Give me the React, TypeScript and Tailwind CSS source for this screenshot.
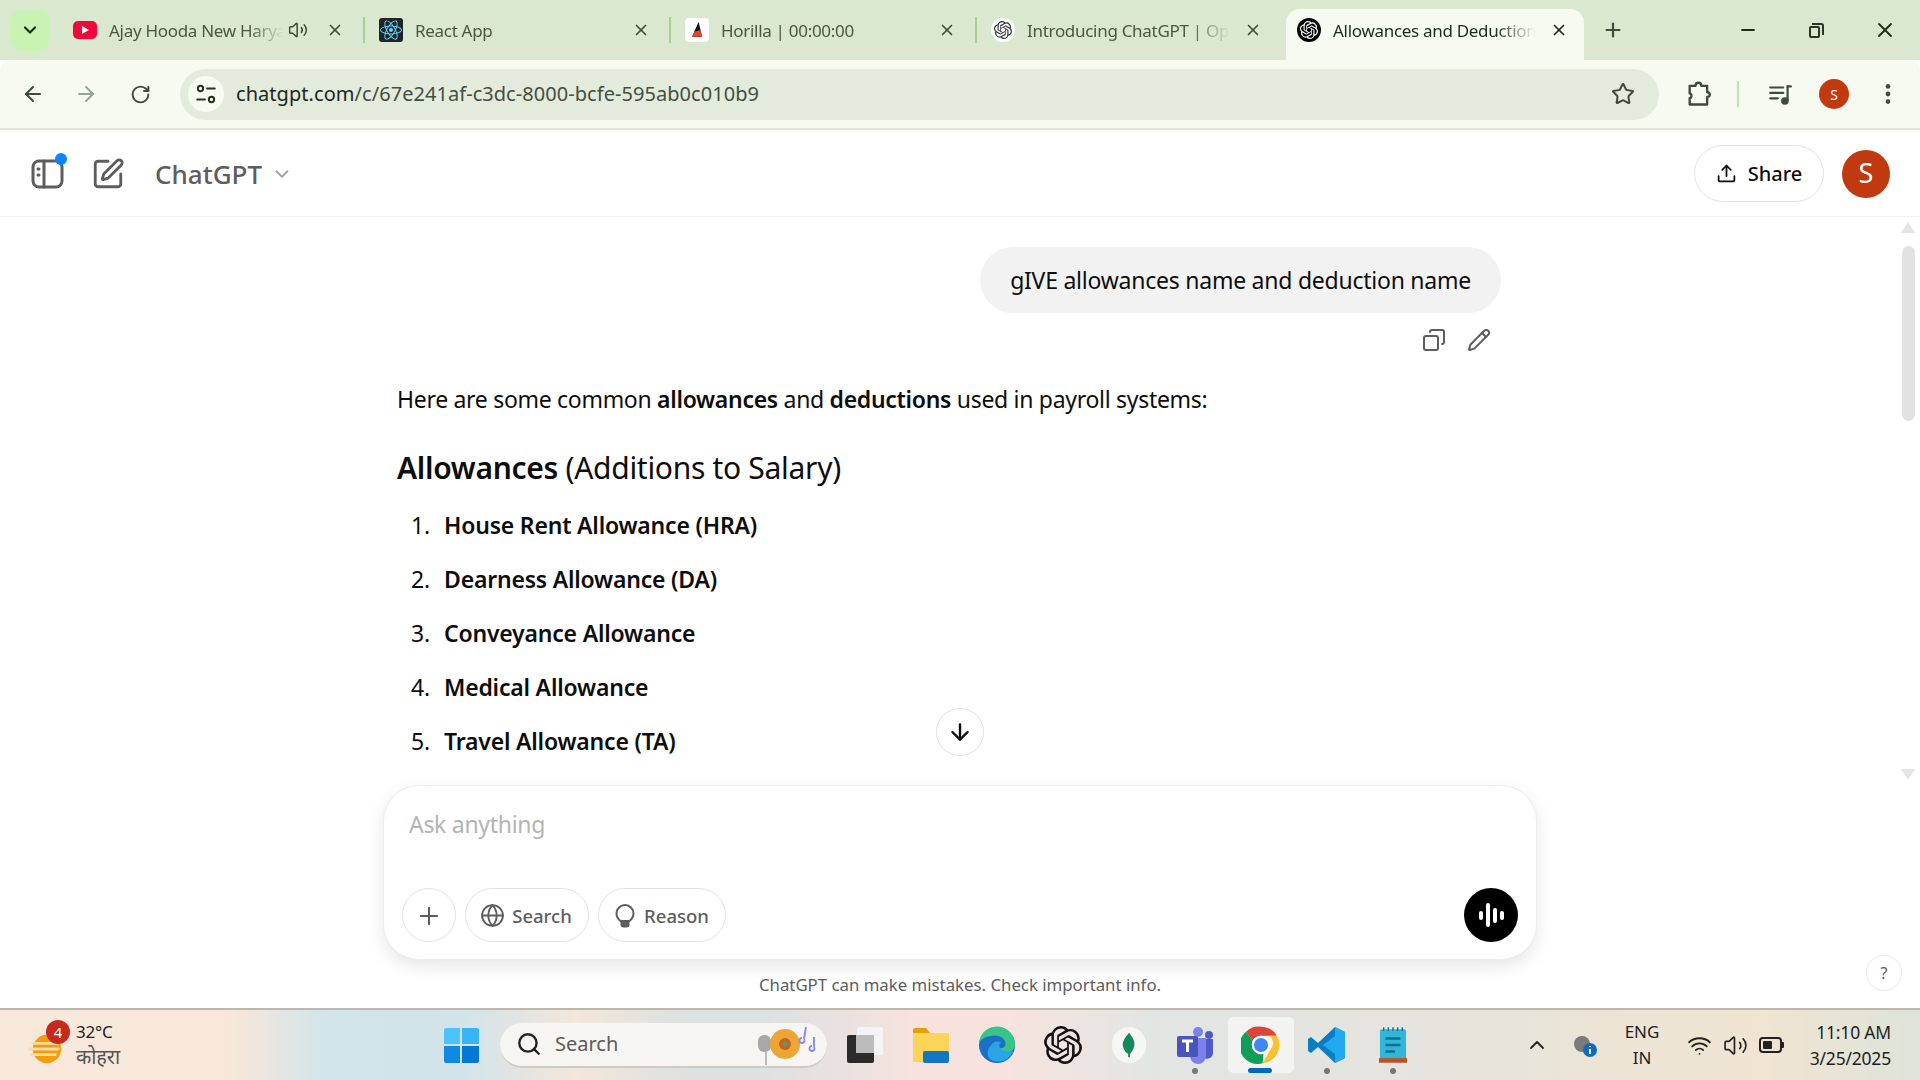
import {
  ArrowDown,
  ArrowLeft,
  ArrowRight,
  ChevronDown,
  ChevronUp,
  Copy,
  EllipsisVertical,
  Globe,
  Minus,
  Pencil,
  Plus,
  RotateCw,
  Search,
  SquarePen,
  Star,
  Upload,
  Volume2,
  Wifi,
  X,
} from 'lucide-react';
import type { ReactNode } from 'react';
import { FaReact } from 'react-icons/fa';
import { SiOpenai } from 'react-icons/si';

const FONT = "font-['Noto_Sans','Open_Sans',sans-serif]";

function TabSeparator() {
  return <div className="absolute right-[-4px] top-[17px] h-[26px] w-[2px] bg-[#a9d08f]" />;
}

function Tab({
  icon,
  title,
  audio,
  active,
  separator,
}: {
  icon: ReactNode;
  title: string;
  audio?: boolean;
  active?: boolean;
  separator?: boolean;
}) {
  return (
    <div className="relative flex h-[60px] w-[306px] shrink-0 items-center pl-[18px] pr-[17px]">
      {active && (
        <div className="absolute bottom-0 left-[7px] right-[1px] top-[9px] rounded-t-[14px] bg-[#f6faf0]" />
      )}
      <div className="relative flex h-6 w-6 shrink-0 items-center justify-center">{icon}</div>
      <div
        className={`relative ml-3 flex-1 overflow-hidden whitespace-nowrap pt-[1px] text-[17px] tracking-[-0.3px] [mask-image:linear-gradient(to_right,black_80%,transparent)] ${
          active ? 'text-[#1e2a1a]' : 'text-[#4c5548]'
        } ${audio ? 'mr-[5px]' : ''}`}
      >
        {title}
      </div>
      {audio && <Volume2 className="relative mr-[4px] h-5 w-5 text-[#3f4a3b]" strokeWidth={1.8} />}
      <X className={`relative ml-[14px] h-[18px] w-[18px] ${active ? 'text-[#222]' : 'text-[#3f4a3b]'}`} strokeWidth={2.2} />
      {separator && <TabSeparator />}
    </div>
  );
}

function TabStrip() {
  return (
    <div className="flex h-[60px] shrink-0 items-center bg-[#d9e8cf] text-[#3f4a3b]">
      <div className="ml-[10px] mr-[5px] flex h-[42px] w-[40px] shrink-0 items-center justify-center rounded-[14px] bg-[#c9f3b2]">
        <ChevronDown className="h-5 w-5 text-[#1d2a18]" strokeWidth={2.6} />
      </div>
      <Tab
        audio
        separator
        title="Ajay Hooda New Haryanvi Song"
        icon={
          <div className="flex h-[18px] w-6 items-center justify-center rounded-[5px] bg-[#f5063a]">
            <div className="h-0 w-0 border-y-[4px] border-l-[7px] border-y-transparent border-l-white" />
          </div>
        }
      />
      <Tab
        separator
        title="React App"
        icon={
          <div className="flex h-6 w-6 items-center justify-center rounded-[3px] bg-[#20232a]">
            <FaReact className="h-[22px] w-[22px] text-[#61dafb]" />
          </div>
        }
      />
      <Tab
        separator
        title="Horilla | 00:00:00"
        icon={
          <div className="flex h-6 w-6 items-center justify-center rounded-[4px] bg-white">
            <svg viewBox="0 0 24 24" className="h-5 w-5">
              <path d="M14 2 L18 20 H6 Z" fill="#111" />
              <path d="M6 20 L9 14 L16 12 L18 20 Z" fill="#e2452c" />
            </svg>
          </div>
        }
      />
      <Tab
        title="Introducing ChatGPT | OpenAI"
        icon={
          <div className="flex h-6 w-6 items-center justify-center rounded-full bg-white">
            <SiOpenai className="h-[18px] w-[18px] text-[#333]" />
          </div>
        }
      />
      <Tab
        active
        title="Allowances and Deductions"
        icon={
          <div className="flex h-6 w-6 items-center justify-center rounded-full bg-black">
            <SiOpenai className="h-[18px] w-[18px] text-white" />
          </div>
        }
      />
      <Plus className="ml-[17px] h-[22px] w-[22px] shrink-0" strokeWidth={2.4} />
      <div className="ml-auto flex items-center">
        <div className="flex w-[69px] justify-center">
          <Minus className="h-5 w-5 text-[#1f2a1b]" strokeWidth={2.6} />
        </div>
        <div className="flex w-[69px] justify-center">
          <div className="relative h-[15px] w-[15px]">
            <div className="absolute bottom-0 left-0 h-[12px] w-[11px] rounded-[2px] border-2 border-[#2a3327]" />
            <div className="absolute right-0 top-0 h-[12px] w-[12px] rounded-tr-[3px] border-r-2 border-t-2 border-[#2a3327]" />
          </div>
        </div>
        <div className="flex w-[69px] justify-center pr-[1px]">
          <X className="h-[24px] w-[24px] text-[#1f2a1b]" strokeWidth={1.8} />
        </div>
      </div>
    </div>
  );
}

function Toolbar() {
  return (
    <div className="flex h-[70px] shrink-0 items-center rounded-t-[12px] border-b-2 border-[#e3e6dd] bg-[#f6faf0] text-[#3f4a3b]">
      <div className="flex w-[180px] shrink-0 items-center">
        <ArrowLeft className="ml-[21px] h-[24px] w-[24px]" strokeWidth={2} />
        <ArrowRight className="ml-[29px] h-[24px] w-[24px] text-[#9aa594]" strokeWidth={2} />
        <RotateCw className="ml-[32px] h-[21px] w-[21px]" strokeWidth={2.2} />
      </div>
      <div className="flex h-[51px] w-[1479px] shrink-0 items-center rounded-full bg-[#e3ecdc] pl-[8px] pr-[24px]">
        <div className="flex h-[36px] w-[36px] shrink-0 items-center justify-center rounded-full bg-[#f6faf0]">
          <svg viewBox="0 0 20 20" className="h-[22px] w-[22px]" fill="none" stroke="#27301f" strokeWidth="1.8" strokeLinecap="round">
            <circle cx="5" cy="5" r="2.4" />
            <path d="M11 5h7M2 15h7" />
            <circle cx="15" cy="15" r="2.4" />
          </svg>
        </div>
        <div className="ml-[12px] flex-1 whitespace-nowrap text-[20px] tracking-[0.05px] text-[#20281c]">
          chatgpt.com<span className="text-[#454e40]">/c/67e241af-c3dc-8000-bcfe-595ab0c010b9</span>
        </div>
        <Star className="h-[24px] w-[24px]" strokeWidth={2} />
      </div>
      <svg viewBox="0 0 24 24" className="ml-[26px] h-[28px] w-[28px]" fill="none" stroke="#3f4a3b" strokeWidth="2" strokeLinejoin="round">
        <path d="M4 5h5c0-3.500 5-3.500 5 0h5v5.500c3 0 3 4 0 4V21H4v-5.500c2 0 2-4 0-4z" />
      </svg>
      <div className="ml-[24px] h-[26px] w-[2px] bg-[#bfe3a8]" />
      <svg viewBox="0 0 24 24" className="ml-[28px] h-[26px] w-[26px]" fill="none" stroke="#3f4a3b" strokeWidth="2" strokeLinecap="round">
        <path d="M3 6h12M3 11h12M3 16h7" />
        <path d="M19 5v13" />
        <path d="M19 5h3" />
        <circle cx="16.500" cy="18.500" r="2.500" fill="#3f4a3b" />
      </svg>
      <div className="ml-[26px] flex h-[30px] w-[30px] items-center justify-center rounded-full bg-[#c0390f] text-[14px] text-white">
        S
      </div>
      <EllipsisVertical className="ml-[26px] h-[26px] w-[26px]" strokeWidth={2.4} />
    </div>
  );
}

function PageHeader() {
  return (
    <div className="flex h-[87px] shrink-0 items-center border-b border-[#f2f2f2] bg-white pt-[1px]">
      <div className="relative ml-[31px] h-[34px] w-[36px]">
        <svg viewBox="0 0 34 32" className="h-[34px] w-[34px]" fill="none" stroke="#5d5d5d" strokeWidth="3" strokeLinecap="round">
          <rect x="2" y="3" width="29" height="26" rx="6" />
          <path d="M13 3v26" />
          <path d="M7 11h1M7 17h1" />
        </svg>
        <div className="absolute -top-[4px] right-0 h-[12px] w-[12px] rounded-full bg-[#0a84ff]" />
      </div>
      <SquarePen className="ml-[24px] h-[34px] w-[34px] text-[#5d5d5d]" strokeWidth={2} />
      <div className="ml-[30px] text-[26px] font-medium leading-none text-[#5d5d5d]">ChatGPT</div>
      <ChevronDown className="ml-[9px] h-[22px] w-[22px] text-[#a3a3a3]" strokeWidth={2} />
      <div className="ml-auto flex h-[57px] w-[130px] items-center justify-center rounded-full border border-[#e3e3e3] text-[#0d0d0d]">
        <Upload className="h-[21px] w-[21px]" strokeWidth={2} />
        <span className="ml-[11px] text-[20px] font-medium">Share</span>
      </div>
      <div className="ml-[18px] mr-[30px] flex h-[48px] w-[48px] items-center justify-center rounded-full bg-[#c0390f] text-[27px] text-white">
        S
      </div>
    </div>
  );
}

const allowances = [
  'House Rent Allowance (HRA)',
  'Dearness Allowance (DA)',
  'Conveyance Allowance',
  'Medical Allowance',
  'Travel Allowance (TA)',
];

function Messages() {
  return (
    <div className="flex min-h-0 flex-1 justify-center overflow-hidden pr-[22px]">
      <div className="w-[1104px] shrink-0 text-[23px] leading-[36px] tracking-[-0.3px] text-[#0d0d0d]">
        <div className="mt-[30px] flex justify-end">
          <div className="flex h-[66px] items-center rounded-[33px] bg-[#f2f2f2] px-[30px] tracking-[-0.24px]">
            gIVE allowances name and deduction name
          </div>
        </div>
        <div className="mr-[10px] mt-[15px] flex h-[24px] justify-end gap-[21px] text-[#5d5d5d]">
          <Copy className="h-[24px] w-[24px] -scale-x-100" strokeWidth={2} />
          <Pencil className="h-[24px] w-[24px]" strokeWidth={2} />
        </div>
        <p className="mt-[29px]">
          Here are some common <strong className="font-semibold">allowances</strong> and{' '}
          <strong className="font-semibold">deductions</strong> used in payroll systems:
        </p>
        <h3 className="mt-[30px] text-[30px] leading-[42px]">
          <strong className="font-semibold">Allowances</strong> (Additions to Salary)
        </h3>
        <ol className="mt-[18px] tracking-[-0.2px]">
          {allowances.map((name, i) => (
            <li key={name} className="mb-[18px] flex">
              <span className="w-[47px] shrink-0 pr-[14px] text-right">{i + 1}.</span>
              <strong className="font-semibold">{name}</strong>
            </li>
          ))}
        </ol>
      </div>
    </div>
  );
}

function Scrollbar() {
  return (
    <div className="absolute bottom-[228px] right-0 top-0 flex w-[22px] flex-col items-center pr-[2px] pt-[5px]">
      <div className="h-0 w-0 border-x-[7px] border-b-[11px] border-x-transparent border-b-[#e4e4e4]" />
      <div className="mt-[13px] h-[175px] w-[13px] rounded-full bg-[#e2e2e2]" />
      <div className="mt-auto h-0 w-0 border-x-[7px] border-t-[11px] border-x-transparent border-t-[#e4e4e4]" />
    </div>
  );
}

function Composer() {
  const pill = 'flex h-[54px] items-center rounded-full border border-[#e3e3e3] pt-[1px] text-[18.5px] font-medium text-[#5d5d5d]';
  return (
    <div className="relative mx-auto mt-[16px] flex h-[175px] w-[1154px] shrink-0 flex-col rounded-[36px] border border-[#ececec] bg-white px-[18px] pb-[17px] shadow-[0_6px_18px_rgba(0,0,0,0.1)]">
      <div className="ml-[7px] mt-[20px] text-[23px] leading-[36px] tracking-[-0.3px] text-[#b4b4b4]">Ask anything</div>
      <div className="mt-auto flex items-center gap-[9px]">
        <div className={`${pill} w-[54px] justify-center`}>
          <Plus className="h-[28px] w-[28px]" strokeWidth={1.8} />
        </div>
        <div className={`${pill} w-[124px] justify-center gap-[7px] pr-[2px]`}>
          <Globe className="h-[25px] w-[25px]" strokeWidth={1.8} />
          Search
        </div>
        <div className={`${pill} w-[128px] justify-center gap-[9px]`}>
          <svg viewBox="0 0 20 26" className="h-[26px] w-[20px]" fill="none" stroke="#5d5d5d" strokeWidth="2">
            <path d="M5.500 18C3 16 1.500 13.500 1.500 10.500a8.500 8.500 0 0 1 17 0c0 3-1.500 5.500-4 7.500z" />
            <path d="M5.500 19h9v2.500a3 3 0 0 1-3 3h-3a3 3 0 0 1-3-3z" fill="#5d5d5d" stroke="none" />
          </svg>
          Reason
        </div>
        <div className="ml-auto flex h-[54px] w-[54px] items-center justify-center gap-[3px] rounded-full bg-black">
          <div className="h-[9px] w-[4px] rounded-full bg-white" />
          <div className="h-[24px] w-[4px] rounded-full bg-white" />
          <div className="h-[15px] w-[4px] rounded-full bg-white" />
          <div className="h-[9px] w-[4px] rounded-full bg-white" />
        </div>
      </div>
    </div>
  );
}

function ChatPane() {
  return (
    <div className="relative flex min-h-0 flex-1 flex-col bg-white">
      <Messages />
      <Scrollbar />
      <Composer />
      <div className="flex h-[48px] shrink-0 items-center justify-center pt-[2px] text-[16.8px] text-[#5d5d5d]">
        ChatGPT can make mistakes. Check important info.
      </div>
      <div className="absolute bottom-[17px] right-[18px] flex h-[36px] w-[36px] items-center justify-center rounded-full border border-[#e8e8e8] text-[16px] text-[#5d5d5d]">
        ?
      </div>
      <div className="absolute left-[936px] top-[491px] flex h-[48px] w-[48px] items-center justify-center rounded-full border border-[#e3e3e3] bg-white">
        <ArrowDown className="h-[26px] w-[26px] text-[#0d0d0d]" strokeWidth={2.2} />
      </div>
    </div>
  );
}

function Dock({ children, dot, active }: { children: ReactNode; dot?: boolean; active?: boolean }) {
  return (
    <div
      className={`relative flex h-[56px] w-[66px] shrink-0 items-center justify-center ${
        active ? 'rounded-[5px] bg-white/55' : ''
      }`}
    >
      {children}
      {dot && <div className="absolute bottom-[-1px] left-[30px] h-[6px] w-[6px] rounded-full bg-[#777]" />}
      {active && <div className="absolute bottom-0 left-[20px] h-[5px] w-[24px] rounded-full bg-[#0067c0]" />}
    </div>
  );
}

function ChromeIcon() {
  return (
    <svg viewBox="0 0 48 48" className="h-[40px] w-[40px]">
      <path d="M24 2a22 22 0 0 1 19 11H24a11 11 0 0 0-10 6L6 8a22 22 0 0 1 18-6z" fill="#db4437" />
      <path d="M43 13a22 22 0 0 1-17 33l9-16a11 11 0 0 0-1-17z" fill="#fbc02d" />
      <path d="M26 46A22 22 0 0 1 6 8l8 11a11 11 0 0 0 13 15l-1 12z" fill="#0f9d58" />
      <circle cx="24" cy="24" r="11" fill="#fff" />
      <circle cx="24" cy="24" r="8.500" fill="#4285f4" />
    </svg>
  );
}

function Taskbar() {
  return (
    <div className="flex h-[72px] shrink-0 items-center border-t-2 border-[#bdb8ae] bg-[linear-gradient(90deg,#f8e8dc_0%,#f8e6da_12%,#d2e5ea_17%,#d2e4ea_24%,#f3e6da_30%,#dbe2e0_36%,#dde2e0_40%,#f8e2de_48%,#f8e2de_52%,#e2e6e2_60%,#e6e4de_74%,#ebe4d6_83%,#f0e4d2_92%,#dde4da_100%)] text-[#1f1f1f]">
      <div className="relative ml-[28px] flex h-[50px] w-[400px] shrink-0 items-center">
        <svg viewBox="0 0 36 40" className="mt-[8px] h-[38px] w-[34px] shrink-0">
          <circle cx="20" cy="20" r="15" fill="#f59b0c" />
          <path d="M5 14h26M2 20h30M3 26h26" stroke="#f3dca6" strokeWidth="3" strokeLinecap="round" />
        </svg>
        <div className="absolute left-[18px] top-[0px] flex h-[24px] w-[24px] items-center justify-center rounded-full bg-[#c42b1c] text-[15px] text-white">
          4
        </div>
        <div className="ml-[14px] flex flex-col text-[17px] leading-[24px] tracking-[-0.2px]">
          <span className="-mt-[1px]">32°C</span>
          <span className="text-[20px] leading-[25px] text-[#555]">कोहरा</span>
        </div>
      </div>
      <Dock>
        <div className="grid h-[35px] w-[35px] grid-cols-2 gap-[2px]">
          <div className="rounded-tl-[2px] bg-[#4cc2ff]" />
          <div className="rounded-tr-[2px] bg-[#38b4f5]" />
          <div className="rounded-bl-[2px] bg-[#0f8ae3]" />
          <div className="rounded-br-[2px] bg-[#0078d4]" />
        </div>
      </Dock>
      <div className="ml-[6px] flex h-[45px] w-[327px] shrink-0 items-center rounded-full border-b-2 border-[#cfcac2] bg-[#f7f5f1] pl-[16px] pr-[5px]">
        <Search className="h-[26px] w-[26px] text-[#222]" strokeWidth={2.2} />
        <span className="ml-[13px] text-[20px] text-[#5a5a5a]">Search</span>
        <svg viewBox="0 0 66 42" className="ml-auto h-[42px] w-[66px]">
          <rect x="2" y="12" width="13" height="17" rx="6" fill="#a8a8a8" />
          <path d="M10 29v13" stroke="#bbb" strokeWidth="2" />
          <circle cx="29" cy="21" r="15" fill="#eda536" />
          <circle cx="29" cy="21" r="6" fill="#c9602a" />
          <circle cx="29" cy="21" r="2.500" fill="#4aa36a" />
          <path d="M50 4l-2 12M48 16a2.500 2.500 0 1 1-2-1M58 14v10M58 24a2.500 2.500 0 1 1-2-1" stroke="#8a8fe0" strokeWidth="2" fill="none" />
        </svg>
      </div>
      <div className="ml-[5px] flex items-center">
        <Dock>
          <div className="relative h-[36px] w-[36px]">
            <div className="absolute right-0 top-0 h-[28px] w-[26px] rounded-[2px] bg-[#f4f4f4]" />
            <div className="absolute bottom-0 left-0 h-[28px] w-[27px] rounded-[2px] bg-[#2b2b2b]" />
            <div className="absolute left-[9px] top-[8px] h-[18px] w-[18px] bg-[#bcbcbc]" />
          </div>
        </Dock>
        <Dock>
          <svg viewBox="0 0 38 38" className="h-[38px] w-[38px]">
            <path d="M1 4a2 2 0 0 1 2-2h11l4 5H1z" fill="#e0a208" />
            <path d="M1 7h36v29H1z" fill="#fcd45a" />
            <rect x="11" y="25" width="26" height="12" rx="2" fill="#0f77c4" />
          </svg>
        </Dock>
        <Dock>
          <svg viewBox="0 0 40 40" className="h-[38px] w-[38px]">
            <circle cx="20" cy="20" r="19" fill="#1b70c4" />
            <path d="M1 20A19 19 0 0 1 39 19c0 6-5 9-10 9-6 0-8-3-8-5 4 1 8 0 8-4 0-5-5-9-11-9C10 10 1 14 1 20z" fill="#39c58a" />
            <path d="M14 20c2-4 8-5 11-2-3-1-4 4 0 7 3 2 8 3 12 1-3 8-11 13-20 11C9 35 8 26 14 20z" fill="#2aa4e6" />
          </svg>
        </Dock>
        <Dock>
          <SiOpenai className="h-[38px] w-[38px] text-[#111]" />
        </Dock>
        <Dock>
          <div className="flex h-[36px] w-[34px] items-center justify-center rounded-full bg-[#f6f6f2]">
            <svg viewBox="0 0 16 28" className="h-[26px] w-[14px]">
              <path d="M8 0c5 6 7 11 6 15-1 5-4 8-5 9v4H7v-4c-2-1-5-4-6-9C0 11 3 6 8 0z" fill="#13895a" />
            </svg>
          </div>
        </Dock>
        <Dock dot>
          <svg viewBox="0 0 38 38" className="h-[38px] w-[38px]">
            <circle cx="22" cy="6" r="5" fill="#7b83eb" />
            <circle cx="33" cy="9" r="4" fill="#5059c9" />
            <path d="M26 13h11v14a6 6 0 0 1-11 3z" fill="#5059c9" />
            <path d="M12 12h18v18a8 8 0 0 1-16 0z" fill="#7b83eb" />
            <rect x="1" y="10" width="21" height="21" rx="2" fill="#4b53bc" />
            <path d="M6 15h11M11.500 15v11" stroke="#fff" strokeWidth="3" />
          </svg>
        </Dock>
        <Dock active>
          <ChromeIcon />
        </Dock>
        <Dock dot>
          <svg viewBox="0 0 38 38" className="h-[38px] w-[38px]">
            <path d="M27 1l10 5v26l-10 5L10 21 3 27l-3-2V13l3-2 7 6z" fill="#0a7ec2" />
            <path d="M27 1l10 5v26l-10 5zM27 10L15 19l12 9z" fill="#23a9f2" fillRule="evenodd" />
          </svg>
        </Dock>
        <Dock dot>
          <svg viewBox="0 0 30 40" className="h-[38px] w-[28px]">
            <path d="M3 3h24a2 2 0 0 1 2 2v29H1V5a2 2 0 0 1 2-2z" fill="#33b5d8" />
            <path d="M5 1v4M10 1v4M15 1v4M20 1v4M25 1v4" stroke="#0f6f8e" strokeWidth="1.500" />
            <path d="M7 13h16M7 20h16M7 27h10" stroke="#0d6f8f" strokeWidth="2.500" />
            <rect x="0" y="34" width="30" height="5" fill="#b5532b" />
          </svg>
        </Dock>
      </div>
      <ChevronUp className="ml-[99px] h-[24px] w-[24px] text-[#222]" strokeWidth={1.8} />
      <svg viewBox="0 0 26 26" className="ml-[23px] h-[26px] w-[26px]">
        <circle cx="10" cy="12" r="8" fill="#7a7a7a" />
        <circle cx="18" cy="18" r="7" fill="#0f6cbd" />
        <path d="M18 14v1M18 17v5" stroke="#fff" strokeWidth="2" />
      </svg>
      <div className="ml-[26px] flex w-[36px] flex-col items-center text-[17px] leading-[26px]">
        <span>ENG</span>
        <span>IN</span>
      </div>
      <Wifi className="ml-[27px] h-[25px] w-[25px] text-[#222]" strokeWidth={1.8} />
      <Volume2 className="ml-[11px] h-[25px] w-[25px] text-[#222]" strokeWidth={1.6} />
      <div className="relative ml-[11px] flex h-[16px] w-[23px] items-center rounded-[4px] border-2 border-[#222] p-[2px]">
        <div className="h-full w-[9px] rounded-[1px] bg-[#222]" />
        <div className="absolute right-[-4px] h-[6px] w-[2px] rounded-r-[1px] bg-[#222]" />
      </div>
      <div className="ml-auto mr-[29px] flex flex-col items-end text-[17.5px] leading-[26px] tracking-[-0.2px]">
        <span>11:10 AM</span>
        <span>3/25/2025</span>
      </div>
    </div>
  );
}

export default function App() {
  return (
    <div className={`flex h-screen w-full flex-col overflow-hidden bg-white ${FONT}`}>
      <TabStrip />
      <Toolbar />
      <PageHeader />
      <ChatPane />
      <Taskbar />
    </div>
  );
}
